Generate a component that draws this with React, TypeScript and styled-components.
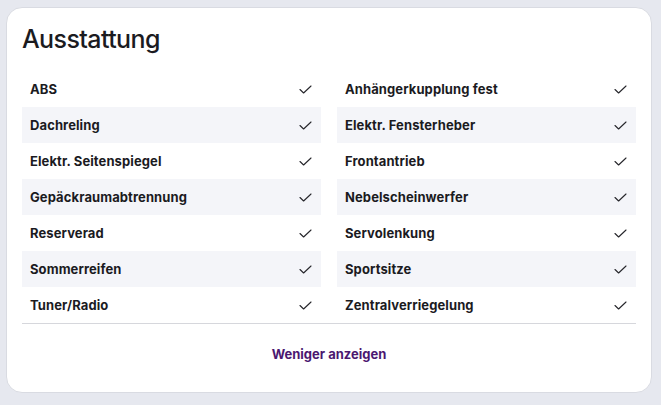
import React from "react";
import styled, { createGlobalStyle } from "styled-components";

const GlobalStyle = createGlobalStyle`
  html, body {
    margin: 0;
    background: #e6e8ef;
  }
  body {
    font-family: "Inter", "Noto Sans", sans-serif;
    color: #1b1b1f;
  }
`;

const Page = styled.div`
  padding: 7px 9px 14px 6px;
`;

const Card = styled.section`
  box-sizing: border-box;
  width: 646px;
  background: #ffffff;
  border: 1px solid #d9dbe2;
  border-radius: 16px;
  padding: 15px 15px 8px;
`;

const Title = styled.h2`
  margin: 0 0 16px;
  font-size: 25px;
  line-height: 32px;
  font-weight: 500;
  letter-spacing: -0.6px;
`;

const List = styled.ul`
  list-style: none;
  margin: 0;
  padding: 0;
  display: grid;
  grid-template-columns: 1fr 1fr;
  grid-template-rows: repeat(7, 36px);
  grid-auto-flow: column;
  column-gap: 16px;
  border-bottom: 1px solid #d6d7dc;
`;

const Item = styled.li<{ $shaded: boolean }>`
  display: flex;
  align-items: center;
  justify-content: space-between;
  padding: 0 9px 0 8px;
  background: ${(p) => (p.$shaded ? "#f4f5f9" : "transparent")};
  font-size: 13px;
  font-weight: 700;
  letter-spacing: 0.1px;
`;

const Footer = styled.div`
  height: 60px;
  display: flex;
  align-items: center;
  justify-content: center;
`;

const ToggleButton = styled.button`
  border: 0;
  background: none;
  padding: 0;
  font-family: inherit;
  font-size: 13px;
  font-weight: 700;
  color: #4b1770;
  cursor: pointer;
`;

const Check = () => (
  <svg width="13" height="9" viewBox="0 0 13 9" fill="none">
    <polyline
      points="1,4.5 4.6,8 12,1"
      stroke="#26262b"
      strokeWidth="1.1"
      strokeLinecap="round"
      strokeLinejoin="round"
    />
  </svg>
);

const features = [
  "ABS",
  "Dachreling",
  "Elektr. Seitenspiegel",
  "Gepäckraumabtrennung",
  "Reserverad",
  "Sommerreifen",
  "Tuner/Radio",
  "Anhängerkupplung fest",
  "Elektr. Fensterheber",
  "Frontantrieb",
  "Nebelscheinwerfer",
  "Servolenkung",
  "Sportsitze",
  "Zentralverriegelung",
];

export default function App() {
  return (
    <Page>
      <GlobalStyle />
      <Card>
        <Title>Ausstattung</Title>
        <List>
          {features.map((name, i) => (
            <Item key={name} $shaded={i % 7 % 2 === 1}>
              <span>{name}</span>
              <Check />
            </Item>
          ))}
        </List>
        <Footer>
          <ToggleButton>Weniger anzeigen</ToggleButton>
        </Footer>
      </Card>
    </Page>
  );
}
